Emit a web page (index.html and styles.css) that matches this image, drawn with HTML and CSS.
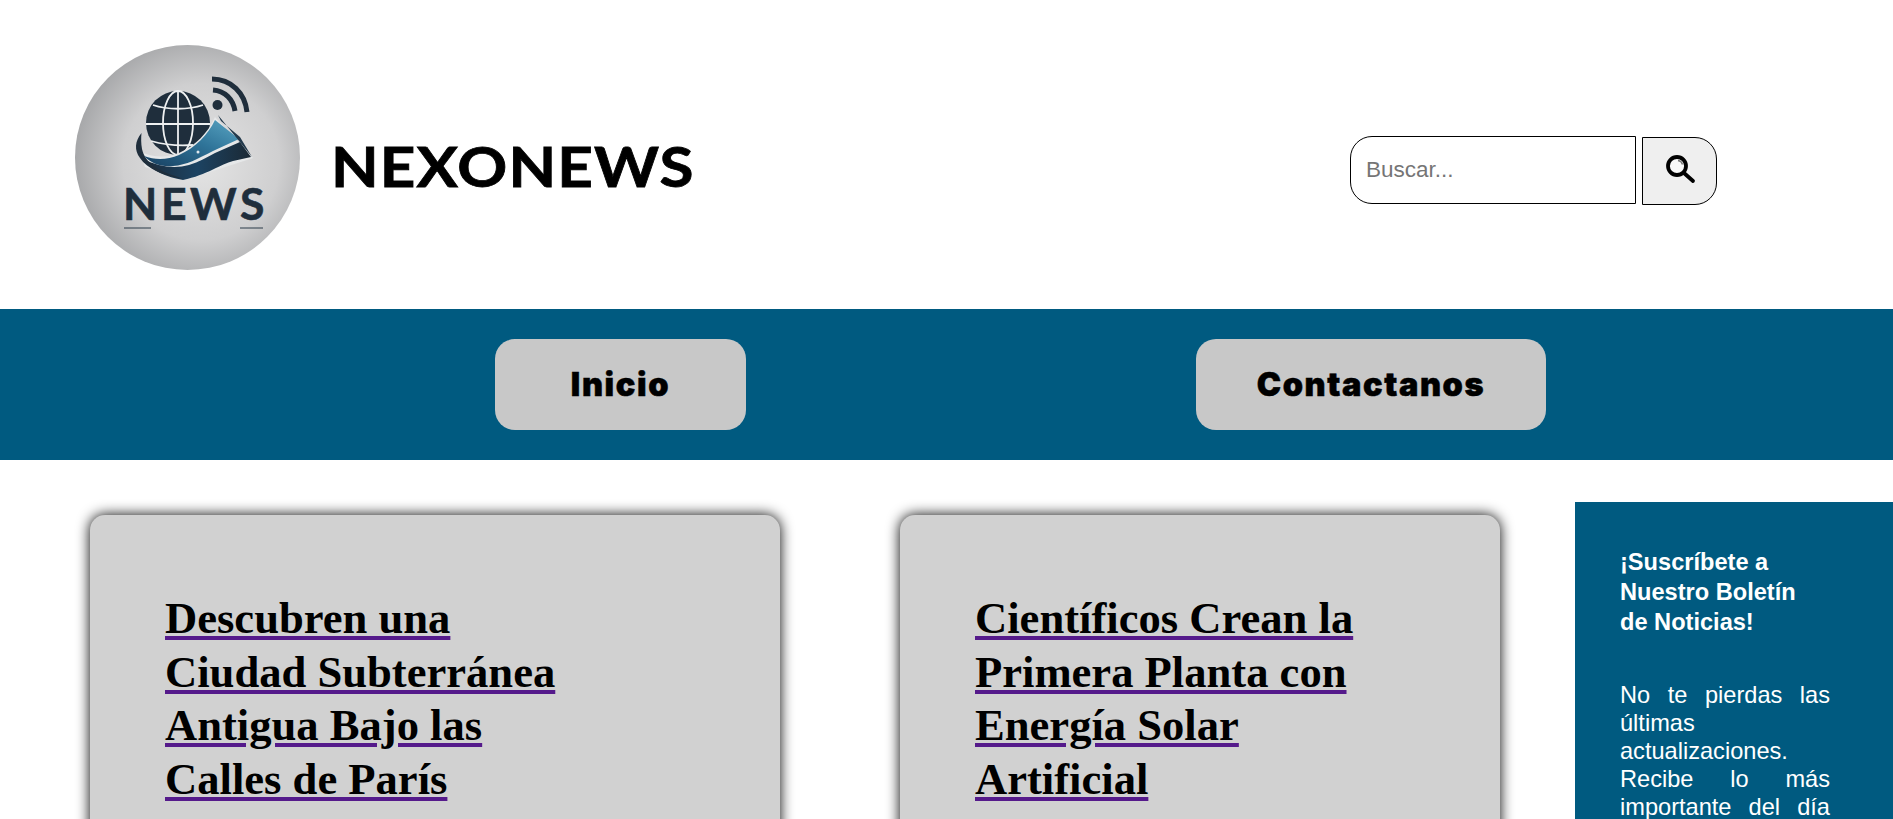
FILE: index.html
```html
<!DOCTYPE html>
<html lang="es">
<head>
  <meta charset="UTF-8">
  <title>NexoNews</title>
  <link rel="stylesheet" href="styles.css">
</head>
<body>
  <header class="site-header">
    <div class="brand">
      <svg class="logo" viewBox="0 0 225 225" width="225" height="225" aria-label="Logo">
        <defs>
          <radialGradient id="disc" cx="56%" cy="52%" r="58%">
            <stop offset="0" stop-color="#e4e4e4"/>
            <stop offset="0.6" stop-color="#cfcfd0"/>
            <stop offset="1" stop-color="#a4a5a7"/>
          </radialGradient>
          <linearGradient id="wing" x1="0" y1="1" x2="1" y2="0">
            <stop offset="0" stop-color="#173f60"/>
            <stop offset="0.55" stop-color="#2f7499"/>
            <stop offset="1" stop-color="#5aa6c4"/>
          </linearGradient>
          <linearGradient id="swoop" x1="0" y1="0" x2="1" y2="0">
            <stop offset="0" stop-color="#1c2b3a"/>
            <stop offset="0.5" stop-color="#1c4362"/>
            <stop offset="1" stop-color="#1b2935"/>
          </linearGradient>
        </defs>
        <circle cx="112.500" cy="112.500" r="112.500" fill="url(#disc)"/>
        <!-- globe -->
        <circle cx="103" cy="78" r="32" fill="#1f2e3c"/>
        <g fill="none" stroke="#eef0f1" stroke-width="1.800">
          <ellipse cx="103" cy="78" rx="15" ry="32"/>
          <path d="M103 46V110"/>
          <path d="M71 79H135"/>
          <path d="M78 60C92 65 114 65 128 60"/>
          <path d="M76 96C90 100 106 101 118 100"/>
        </g>
        <!-- signal -->
        <circle cx="142.500" cy="60" r="5" fill="#1f2e3c"/>
        <g fill="none" stroke="#1f2e3c" stroke-width="5">
          <path d="M138 45C150 46 158 54 160 66"/>
          <path d="M137 34C156 34 170 48 172 67"/>
        </g>
        <!-- ribbon: white under-layer, dark swoop, blue panel -->
        <path d="M140 72C133 88 120 101 104 108C92 113 78 113 64 106L70 122L110 135L178 113Z" fill="#e6e8e9"/>
        <path d="M165 97L176 112L158 116C146 119 132 130 108 135C92 132 76 126 68 114C84 122 100 124 114 120C124 117 132 112 140 108Z" fill="url(#swoop)"/>
        <path d="M66.500 88C60 96 59 105 65 113C72 124 90 131 108 134L100 131C84 126 70 118 67 104C66 98 66 93 66.500 88Z" fill="#1f2e3c"/>
        <path d="M140 75C133 90 120 103 104 110C92 115 80 115 69 111C77 119 86 122 98 121C112 120 122 114 138 106L164 94Z" fill="url(#wing)"/>
        <path d="M143 70L177 112L165 92L146 76Z" fill="#22394c"/>
        <circle cx="123" cy="107" r="1.500" fill="#dfe8ee"/>
        <!-- wordmark -->
        <text class="logo-word" x="48" y="175">NEWS</text>
        <path d="M49 183H76M165 183H188" stroke="#2a3a48" stroke-width="1"/>
      </svg>
      <h1 class="brand-name">NEXONEWS</h1>
    </div>
    <form class="search">
      <input class="search-input" type="text" placeholder="Buscar...">
      <button class="search-btn" type="button" aria-label="Buscar">
        <svg viewBox="0 0 32 32" width="32" height="32">
          <circle cx="13" cy="13" r="9" fill="#f8f8f8" stroke="#000" stroke-width="3.800"/>
          <path d="M20 20L29 28" stroke="#000" stroke-width="3.800" stroke-linecap="round"/>
          <path d="M14 7.500C16 7.800 18 9.500 18.500 11.500" fill="none" stroke="#777" stroke-width="1.400"/>
        </svg>
      </button>
    </form>
  </header>

  <nav class="main-nav">
    <a class="nav-btn nav-home" href="#">Inicio</a>
    <a class="nav-btn nav-contact" href="#">Contactanos</a>
  </nav>

  <main class="content">
    <article class="news-card card-wide">
      <a class="news-link" href="#"><h2>Descubren una Ciudad Subterránea Antigua Bajo las Calles de París</h2></a>
    </article>
    <article class="news-card card-narrow">
      <a class="news-link" href="#"><h2>Científicos Crean la Primera Planta con Energía Solar Artificial</h2></a>
    </article>
    <aside class="newsletter">
      <h3>¡Suscríbete a Nuestro Boletín de Noticias!</h3>
      <p>No te pierdas las últimas actualizaciones. Recibe lo más importante del día</p>
    </aside>
  </main>
</body>
</html>
```

FILE: styles.css
```css
html, body {
  height: 100vh;
  overflow: hidden;
}
body {
  margin: 0;
  background: #fff;
  color: #000;
  font-family: 'Liberation Sans', Arial, sans-serif;
}

/* header */
.site-header {
  height: 309px;
  display: flex;
  align-items: center;
  justify-content: space-between;
  padding: 0 176px 0 75px;
  box-sizing: border-box;
}
.brand {
  display: flex;
  align-items: center;
  gap: 31px;
}
.logo {
  display: block;
  margin-top: 6px;
}
.logo-word {
  font-family: 'Lato', sans-serif;
  font-weight: 700;
  font-size: 44.500px;
  letter-spacing: 3.600px;
  fill: #1f2e3c;
  stroke: #1f2e3c;
  stroke-width: .6px;
}
.brand-name {
  margin: 22px 0 0;
  font-family: 'Lato', sans-serif;
  font-weight: 700;
  font-size: 56px;
  -webkit-text-stroke: .8px #000;
  letter-spacing: 1px;
  transform: scaleX(1.105);
  transform-origin: left center;
}
.search {
  display: flex;
  gap: 6px;
  margin-top: 32px;
}
.search-input {
  width: 286px;
  height: 68px;
  box-sizing: border-box;
  padding: 0 15px;
  border: 1px solid #000;
  border-radius: 22px 0 0 22px;
  font-family: inherit;
  font-size: 22.500px;
}
.search-btn {
  width: 75px;
  height: 68px;
  margin-top: 1px;
  padding: 0 0 4px;
  display: flex;
  align-items: center;
  justify-content: center;
  background: #efefef;
  border: 1px solid #000;
  border-radius: 0 22px 22px 0;
}

/* nav */
.main-nav {
  height: 151px;
  display: flex;
  align-items: center;
  background: #005a80;
  padding-left: 495px;
  gap: 450px;
}
.nav-btn {
  height: 91px;
  display: flex;
  align-items: center;
  justify-content: center;
  background: #c8c8c8;
  border-radius: 20px;
  color: #000;
  text-decoration: none;
  font-family: 'Inter', sans-serif;
  font-weight: 900;
  font-size: 32.500px;
  letter-spacing: 1.600px;
  -webkit-text-stroke: .5px #000;
}
.nav-home { width: 251px; }
.nav-contact { width: 350px; }

/* noticias */
.content {
  display: flex;
  align-items: flex-start;
  padding: 42px 0 0 90px;
}
.news-card {
  flex: none;
  margin-top: 13px;
  height: 600px;
  box-sizing: border-box;
  background: #d1d1d1;
  border-radius: 15px;
  box-shadow: 0 0 14px #000;
  padding: 77px 0 0 75px;
}
.card-wide {
  width: 690px;
  margin-right: 120px;
}
.card-narrow {
  width: 600px;
  margin-right: 75px;
}
.news-link {
  color: #551a8b;
  text-decoration-thickness: 4px;
  text-underline-offset: 3px;
}
.news-link h2 {
  width: 410px;
  margin: 0;
  color: #000;
  font-family: 'Liberation Serif', 'Times New Roman', serif;
  font-size: 44.600px;
  line-height: 53.700px;
}

/* boletin */
.newsletter {
  flex: none;
  width: 210px;
  height: 400px;
  background: #005a80;
  color: #fff;
  padding: 45px 63px 0 45px;
}
.newsletter h3 {
  margin: 0 6px 44px 0;
  font-size: 23.600px;
  line-height: 30px;
}
.newsletter p {
  margin: 0;
  font-size: 23.600px;
  line-height: 28px;
  text-align: justify;
  text-align-last: justify;
}
```
